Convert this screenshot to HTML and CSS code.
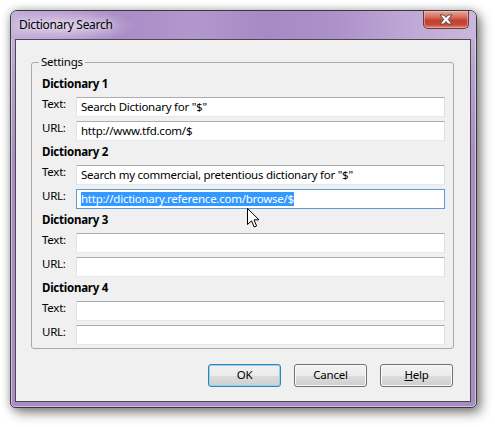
FILE: index.html
```html
<!DOCTYPE html>
<html>
<head>
<meta charset="utf-8">
<link rel="stylesheet" href="styles.css">
</head>
<body>
<div class="window">
  <div class="titlebar">
    <span class="title">Dictionary Search</span>
    <div class="close">
      <svg width="16" height="11" viewBox="0 0 16 11">
        <path d="M2 1 H6 L8 3.5 L10 1 H14 L10.2 5.5 L14 10 H10 L8 7.5 L6 10 H2 L5.8 5.5 Z" fill="#ffffff" stroke="#5a4a55" stroke-width="1" stroke-linejoin="round"/>
      </svg>
    </div>
  </div>
  <div class="client">
    <fieldset class="group">
      <legend>Settings</legend>
      <div class="dict">
        <div class="dict-name">Dictionary 1</div>
        <div class="row"><span class="lbl">Text:</span><div class="field">Search Dictionary for "$"</div></div>
        <div class="row"><span class="lbl">URL:</span><div class="field">http://www.tfd.com/$</div></div>
      </div>
      <div class="dict">
        <div class="dict-name">Dictionary 2</div>
        <div class="row"><span class="lbl">Text:</span><div class="field">Search my commercial, pretentious dictionary for "$"</div></div>
        <div class="row"><span class="lbl">URL:</span><div class="field focus"><span class="sel">http://dictionary.reference.com/browse/$</span></div></div>
      </div>
      <div class="dict">
        <div class="dict-name">Dictionary 3</div>
        <div class="row"><span class="lbl">Text:</span><div class="field"></div></div>
        <div class="row"><span class="lbl">URL:</span><div class="field"></div></div>
      </div>
      <div class="dict">
        <div class="dict-name">Dictionary 4</div>
        <div class="row"><span class="lbl">Text:</span><div class="field"></div></div>
        <div class="row"><span class="lbl">URL:</span><div class="field"></div></div>
      </div>
    </fieldset>
    <div class="buttons">
      <div class="btn default">OK</div>
      <div class="btn">Cancel</div>
      <div class="btn"><u>H</u>elp</div>
    </div>
  </div>
</div>
<svg class="cursor" width="13" height="20" viewBox="0 0 13 20">
  <path d="M0.5 0.5 V16.5 L4.5 12.8 L7.2 19 L9.6 18 L7 11.8 H12 Z" fill="#ffffff" stroke="#000000" stroke-width="1" stroke-linejoin="miter"/>
</svg>
</body>
</html>
```
FILE: styles.css
```css
html, body {
  margin: 0;
  padding: 0;
  background: #ffffff;
}
body {
  width: 495px;
  height: 427px;
  overflow: hidden;
  position: relative;
  font-family: "Noto Sans", "DejaVu Sans", sans-serif;
  font-size: 11.5px;
  letter-spacing: -0.25px;
  color: #000;
}
.window {
  margin: 10px 0 0 10px;
  width: 467px;
  height: 398px;
  box-sizing: border-box;
  border: 1px solid #3a3a3a;
  border-radius: 7px 7px 5px 5px;
  background:
    linear-gradient(180deg, #cbb9dc 0px, #b9a2d1 60px, #ab8ec7 140px, #a98bc6 100%);
  box-shadow: 4px 5px 12px rgba(0,0,0,0.45), 0 0 8px rgba(0,0,0,0.25), inset 0 0 0 1px rgba(255,255,255,0.45);
  display: flex;
  flex-direction: column;
  padding: 0 5px 5px 4px;
  overflow: hidden;
}
.titlebar {
  height: 28px;
  flex: none;
  margin: 0 -5px 0 -4px;
  padding: 0 7px 0 8px;
  display: flex;
  align-items: flex-start;
  justify-content: space-between;
  background:
    radial-gradient(ellipse 70px 16px at 55px 15px, rgba(255,255,255,0.5), rgba(255,255,255,0) 100%),
    linear-gradient(90deg, #c3aed8 0%, #b499ce 12%, #ab8dc7 25%, #b297cc 40%, #a789c5 55%, #ad91c9 70%, #bea7d5 85%, #cab8dc 100%);
}
.title {
  line-height: 16px;
  margin-top: 6px;
  font-size: 12px;
  letter-spacing: -0.3px;
  text-shadow: 0 0 6px rgba(255,255,255,0.8);
}
.close {
  width: 46px;
  height: 18px;
  box-sizing: border-box;
  border: 1px solid #6b3a38;
  border-top: none;
  border-radius: 0 0 5px 5px;
  background: linear-gradient(180deg, #e6a79b 0%, #d7705f 35%, #c4402f 55%, #c9483a 80%, #e18a78 100%);
  box-shadow: inset 0 0 0 1px rgba(255,210,200,0.45);
  display: flex;
  align-items: center;
  justify-content: center;
}
.close svg { display: block; }
.client {
  flex: 1;
  border: 1px solid #4a4a4a;
  background: #f0f0f0;
  padding: 14px 16px 0 15px;
  display: flex;
  flex-direction: column;
}
.group {
  margin: 0;
  padding: 6px 8px 3px 10px;
  border: 1px solid #a9a9a9;
  border-radius: 3px;
  min-width: 0;
  display: flex;
  flex-direction: column;
  gap: 3px;
}
.group legend {
  padding: 0 2px;
  margin-left: -3px;
  line-height: 16px;
}
.dict {
  display: flex;
  flex-direction: column;
}
.dict-name {
  font-weight: bold;
  line-height: 16px;
  margin-bottom: 5px;
}
.row {
  display: flex;
  align-items: flex-start;
  height: 20px;
}
.row + .row { margin-top: 4px; }
.lbl {
  width: 34px;
  flex: none;
  line-height: 13px;
}
.field {
  flex: 1;
  height: 20px;
  box-sizing: border-box;
  background: #ffffff;
  border: 1px solid;
  border-color: #abadb3 #dbdfe6 #e3e9ef #e2e3ea;
  padding-left: 4px;
  line-height: 18px;
  white-space: nowrap;
  overflow: hidden;
}
.field.focus {
  border-color: #5b9bd5;
}
.sel {
  background: #3399ff;
  color: #ffffff;
  display: inline-block;
  line-height: 14px;
  vertical-align: middle;
  margin-top: -1px;
}
.buttons {
  display: flex;
  justify-content: flex-end;
  gap: 13px;
  margin-top: 15px;
  margin-right: 1px;
}
.btn {
  width: 73px;
  height: 23px;
  box-sizing: border-box;
  border: 1px solid #707070;
  border-radius: 3px;
  background: linear-gradient(180deg, #f2f2f2 0%, #ebebeb 50%, #dddddd 50%, #cfcfcf 100%);
  box-shadow: inset 0 0 0 1px #fafafa;
  text-align: center;
  line-height: 20px;
}
.btn.default {
  border-color: #3c7fb1;
  box-shadow: inset 0 0 0 1px #8ad6f2;
}
.cursor {
  position: absolute;
  left: 247px;
  top: 208px;
}
```
